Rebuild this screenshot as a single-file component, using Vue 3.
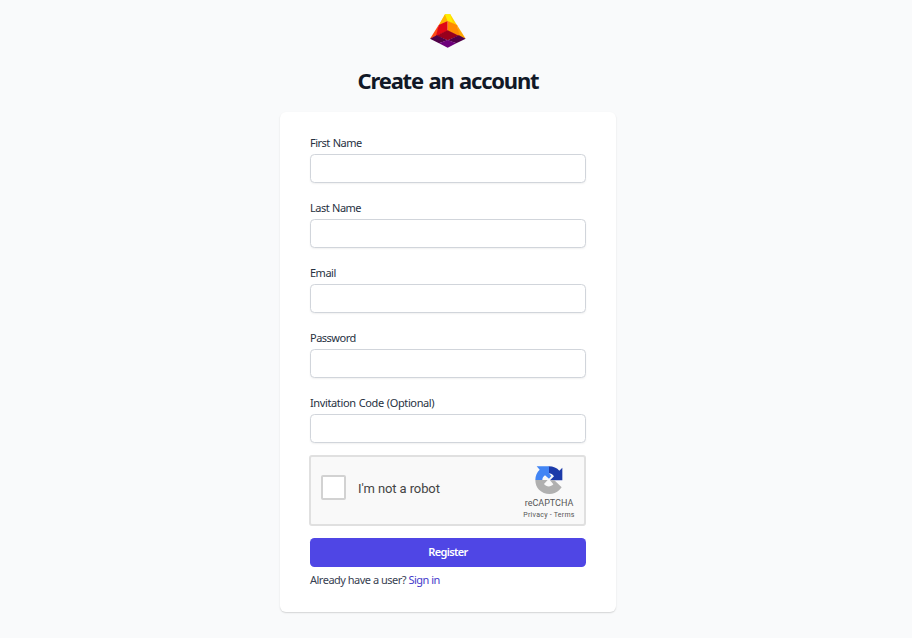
<script setup>
import { reactive } from 'vue'

const fields = [
  { id: 'first', label: 'First Name', type: 'text' },
  { id: 'last', label: 'Last Name', type: 'text' },
  { id: 'email', label: 'Email', type: 'email' },
  { id: 'password', label: 'Password', type: 'password' },
  { id: 'code', label: 'Invitation Code (Optional)', type: 'text' },
]
const form = reactive({ first: '', last: '', email: '', password: '', code: '' })
</script>

<template>
  <main class="page">
    <svg class="logo" viewBox="30 24 108 102" aria-hidden="true">
      <path fill="#ffd500" d="M75 25h16l22 36-30-15-27 15z" />
      <path fill="#ffb300" d="M75 25L56 58l27-13z" />
      <path fill="#ffee00" d="M75 25h16l7 25-15-5z" />
      <path fill="#ff4b16" d="M56 57L30 98l22-9z" />
      <path fill="#ffa600" d="M111 57l26 41-22-9z" />
      <path fill="#df0716" d="M83 45L56 57l-8 34 35-16z" />
      <path fill="#ff8a00" d="M83 45l28 12 8 34-36-16z" />
      <path fill="#98001c" d="M83 73l34 16-34 14-34-14z" />
      <path fill="#500047" d="M50 88L30 98l27 14 26-9z" />
      <path fill="#500047" d="M117 88l20 10-28 14-26-9z" />
      <path fill="#6d007a" d="M83 102l26 10-26 13-26-13z" />
    </svg>
    <h1 class="title">Create an account</h1>
    <form class="card" @submit.prevent>
      <div v-for="f in fields" :key="f.id" class="field">
        <label class="label" :class="f.id" :for="f.id">{{ f.label }}</label>
        <input :id="f.id" v-model="form[f.id]" class="input" :type="f.type" />
      </div>
      <div class="captcha">
        <span class="box"></span>
        <span class="robot">I'm not a robot</span>
        <div class="brand">
          <svg class="mark" viewBox="0 0 84 84" aria-hidden="true">
            <path fill="#1c3aa9" d="M41 1C55 1 66 6 73 14L82 5V43H45L57 31C53 25 48 22 41 22Z" />
            <path fill="#4285f4" d="M42 1V22L49 30L42 38L30 28C25 32 22 36 22 42H1C1 29 6 18 14 11L5 1Z" />
            <path fill="#b0b0b0" d="M1 42H38L27 54C33 62 46 65 55 55L45 43H58L80 64L73 72C56 89 28 87 12 71C5 64 1 54 1 42Z" />
          </svg>
          <span class="name">reCAPTCHA</span>
          <span class="terms">Privacy <i>-</i> Terms</span>
        </div>
      </div>
      <button class="submit" type="submit">Register</button>
      <p class="foot">Already have a user? <a class="link">Sign in</a></p>
    </form>
  </main>
</template>

<style>
body {
  background: #f9fafb;
}
</style>

<style scoped>
.page {
  box-sizing: border-box;
  width: 896px;
  min-height: 638px;
  padding-top: 14px;
  display: flex;
  flex-direction: column;
  align-items: center;
  font-family: "Noto Sans", "Open Sans", sans-serif;
}
.logo {
  width: 36px;
  height: 34px;
  display: block;
}
.title {
  margin: 17px 0;
  font-size: 22px;
  line-height: 30px;
  font-weight: 700;
  letter-spacing: -1.2px;
  word-spacing: 1px;
  color: #111827;
  white-space: nowrap;
}
.card {
  box-sizing: border-box;
  width: 336px;
  height: 500px;
  padding: 23px 30px 24px;
  background: #fff;
  border-radius: 6px;
  box-shadow: 0 1px 2px rgba(0, 0, 0, 0.1), 0 1px 1px rgba(0, 0, 0, 0.06);
}
.field {
  height: 65px;
}
.label {
  display: block;
  height: 19px;
  line-height: 15px;
  font-size: 11px;
  font-weight: 400;
  letter-spacing: -0.5px;
  word-spacing: 0.5px;
  color: #273142;
  white-space: nowrap;
}
.label.code {
  letter-spacing: -0.37px;
}
.input {
  display: block;
  box-sizing: border-box;
  width: 276px;
  height: 29px;
  padding: 0 9px;
  border: 1px solid #d1d5db;
  border-radius: 4.5px;
  background: #fff;
  box-shadow: 0 1px 2px rgba(0, 0, 0, 0.06);
  outline: none;
}
.captcha {
  box-sizing: border-box;
  display: flex;
  align-items: center;
  width: 277px;
  height: 71px;
  margin: -5px -1px 12px;
  padding: 0 8px 0 10px;
  background: #f9f9f9;
  border: 2px solid #e0e0e0;
  border-radius: 3px;
  font-family: Roboto, "Liberation Sans", sans-serif;
}
.box {
  box-sizing: border-box;
  width: 25px;
  height: 25px;
  margin-top: -7px;
  border: 2px solid #d2d2d2;
  border-radius: 2px;
  background: #fff;
}
.robot {
  margin: -4px 0 0 12px;
  font-size: 13px;
  letter-spacing: -0.1px;
  color: #444;
  white-space: nowrap;
}
.brand {
  margin-left: auto;
  margin-top: 6px;
  width: 54px;
  display: flex;
  flex-direction: column;
  align-items: center;
  color: #555;
  white-space: nowrap;
}
.mark {
  width: 28px;
  height: 28px;
}
.name {
  margin-top: 3px;
  font-size: 9px;
  line-height: 12px;
}
.terms {
  font-size: 7px;
  line-height: 12px;
  letter-spacing: 0.25px;
}
.terms i {
  font-style: normal;
}
.submit {
  display: block;
  width: 276px;
  height: 29px;
  padding: 0 0 1px;
  border: 0;
  border-radius: 4.5px;
  background: #4f46e5;
  color: #fff;
  font: 600 11px/28px "Noto Sans", "Open Sans", sans-serif;
  letter-spacing: -0.65px;
}
.foot {
  margin: 5px 0 0;
  font-size: 11px;
  line-height: 15px;
  letter-spacing: -0.5px;
  color: #374151;
  white-space: nowrap;
}
.link {
  color: #4338ca;
}
</style>
